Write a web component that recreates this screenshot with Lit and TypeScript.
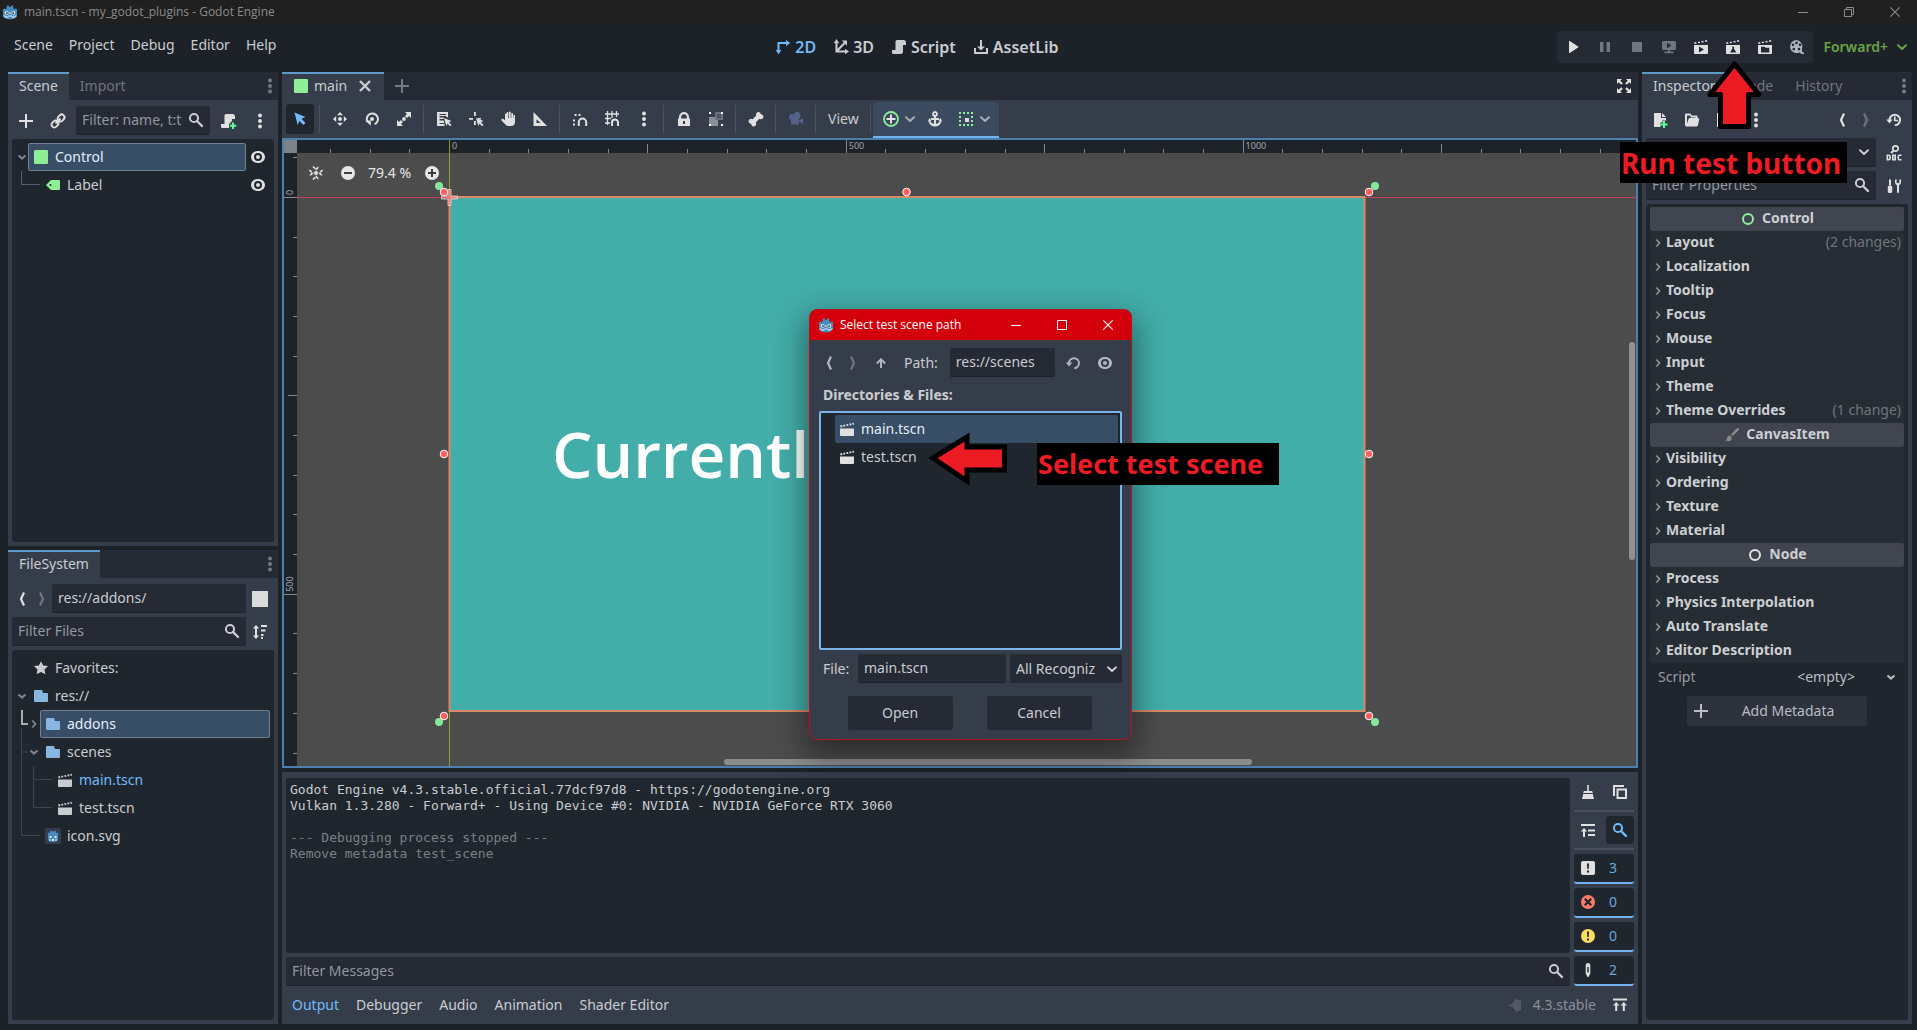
import { LitElement, html, svg, css, nothing } from "lit";
import { customElement } from "lit/decorators.js";
import { classMap } from "lit/directives/class-map.js";

/* 16 x 16 glyphs, painted with currentColor unless a node colour is part of the icon */
const ICONS: Record<string, unknown> = {
  godot: svg`<path fill="#478cbf" d="M1 8 .8 5.6 2.6 4.400 3.700 5 4.900 4.300 4.600 2 6.600 1.200 7.300 2.900h1.400L9.400 1.200l2 .8-.3 2.300 1.200.7 1.100-.6 1.800 1.200L15 8v3.500c0 2.300-3 3.800-7 3.800s-7-1.500-7-3.800z"/><circle cx="4.600" cy="8.800" r="1.900" fill="#e4eef6"/><circle cx="11.400" cy="8.800" r="1.900" fill="#e4eef6"/><circle cx="4.900" cy="8.900" r="1" fill="#3a4450"/><circle cx="11.100" cy="8.900" r="1" fill="#3a4450"/><path d="M8 8v2.200M1.500 12h2v1.200h2.400V12h4.200v1.200h2.400V12h2" fill="none" stroke="#e4eef6" stroke-width=".9"/>`,
  plus: svg`<path d="M7 1v6H1v2h6v6h2V9h6V7H9V1z"/>`,
  link: svg`<g transform="rotate(-45 8 8)" fill="none" stroke="currentColor" stroke-width="1.900"><rect x="0" y="5.200" width="7.400" height="5.600" rx="2.800"/><rect x="8.600" y="5.200" width="7.400" height="5.600" rx="2.800"/><path d="M4.500 8h7"/></g>`,
  search: svg`<circle cx="6" cy="6" r="4.100" fill="none" stroke="currentColor" stroke-width="2"/><path d="m9 9 5 5" stroke="currentColor" stroke-width="2.400" stroke-linecap="round"/>`,
  script: svg`<path d="M6 1a1.500 1.500 0 0 0-1.500 1.500V11H1v2.500A1.500 1.500 0 0 0 2.500 15H9.500a2.500 2.500 0 0 0 2.500-2.500V6h3V3.500A2.500 2.500 0 0 0 12.500 1z"/>`,
  scriptNew: svg`<path d="M6 1a1.500 1.500 0 0 0-1.500 1.500V11H1v2.500A1.500 1.500 0 0 0 2.500 15H9v-4.500h1.500V8.500H12V6h3V3.500A2.500 2.500 0 0 0 12.500 1z"/><path fill="#5fff97" d="M12 9.500v2.200H9.800v2H12V16h2v-2.300h2.200v-2H14V9.500z"/>`,
  dots: svg`<circle cx="8" cy="2.400" r="2"/><circle cx="8" cy="8" r="2"/><circle cx="8" cy="13.600" r="2"/>`,
  eye: svg`<path fill-rule="evenodd" d="M8 2c-4 0-7 2.600-7 6s3 6 7 6 7-2.600 7-6-3-6-7-6m0 2a4 4 0 1 1 0 8 4 4 0 0 1 0-8m0 2a2 2 0 1 0 0 4 2 2 0 0 0 0-4"/>`,
  control: svg`<rect x="1" y="1" width="14" height="14" rx="1.200" fill="#8eef97"/>`,
  label: svg`<path fill="#8eef97" fill-rule="evenodd" d="M6 3 1 8l5 5h8a1 1 0 0 0 1-1V4a1 1 0 0 0-1-1zM5.500 7a1 1 0 1 1 0 2 1 1 0 0 1 0-2"/>`,
  down: svg`<path d="m4.500 6.500 3.500 3 3.500-3" fill="none" stroke="currentColor" stroke-width="2.200"/>`,
  downWide: svg`<path d="m4 6.300 4 3.700 4-3.700" fill="none" stroke="currentColor" stroke-width="2" stroke-linecap="round" stroke-linejoin="round"/>`,
  right: svg`<path d="m6.300 4.500 3.200 3.500-3.200 3.500" fill="none" stroke="currentColor" stroke-width="1.800"/>`,
  back: svg`<path d="M10 1.500 7 8l3 6.500" fill="none" stroke="currentColor" stroke-width="2.200"/>`,
  forward: svg`<path d="m6 1.500 3 6.500-3 6.500" fill="none" stroke="currentColor" stroke-width="2.200"/>`,
  up: svg`<path d="M8 13V5M3.800 8.500 8 4.300l4.200 4.200" fill="none" stroke="currentColor" stroke-width="2"/>`,
  reload: svg`<path d="M4 8a5 5 0 1 1 5.300 5.200" fill="none" stroke="currentColor" stroke-width="2"/><path d="M.8 7.500h6.600L4 11.500z"/>`,
  square: svg`<path d="M0 0h16v16H0z" fill="#d9dcda"/>`,
  sort: svg`<path d="M4 1 .8 4.500H3v7H.8L4 15l3.200-3.500H5v-7h2.200zM9 1h6v2H9zM9 5.500h4.500v2H9zM9 10h2.500v2H9zM9 13h2v2H9z"/>`,
  star: svg`<path d="m8 1.200 2.100 4.300 4.900.6-3.500 3.300.9 4.800L8 11.900l-4.400 2.300.9-4.800L1 6.100l4.900-.6z"/>`,
  folder: svg`<path fill="#87b6e0" d="M2 2a1 1 0 0 0-1 1v10a1 1 0 0 0 1 1h12a1 1 0 0 0 1-1V6a1 1 0 0 0-1-1h-3.500a1 1 0 0 1-1-1V3a1 1 0 0 0-1-1z"/>`,
  clap: svg`<path d="M1 7.500h14V14a1 1 0 0 1-1 1H2a1 1 0 0 1-1-1zM1 4.500l1.800-.4.700 1.900-1.700.4zM4 3.900l1.800-.4.700 1.800-1.800.4zM7.100 3.300l1.700-.4.800 1.800-1.800.3zM10.100 2.700l1.800-.4.700 1.800-1.700.3zM13.100 2l1.500-.3.500 1.900-1.300.3z"/>`,
  gdicon: svg`<rect width="16" height="16" rx="2" fill="#363d52"/><path fill="#478cbf" d="M3 7 2.500 5.500 4 4.500l1 .5.500-2 1.500-.3.500 1h1l.5-1 1.500.3.500 2 1-.5 1.500 1L13 7v4.500c0 1.700-2.200 2.500-5 2.500s-5-.8-5-2.500z"/><path d="M4.500 8h2v2h-2zM9.500 8h2v2h-2zM4 11.500h2v1H4zM7 11h2v2H7zM10 11.500h2v1h-2z" fill="#dfeaf4"/>`,
  close: svg`<path d="m3 3 10 10M13 3 3 13" stroke="currentColor" stroke-width="2.400"/>`,
  select: svg`<path d="M2.500 1.500 13.500 6l-4 1.800 4 4.200-2 2-4.200-4-1.600 4z"/>`,
  move: svg`<circle cx="8" cy="8" r="2"/><path d="M8 1 5 4.200h6zM8 15l3-3.200H5zM1 8l3.200 3V5zM15 8l-3.200-3v6z"/>`,
  rotate: svg`<path d="M3.600 11a5.600 5.600 0 1 1 7 2.200" fill="none" stroke="currentColor" stroke-width="2"/><circle cx="8" cy="8" r="2"/><path d="M1.300 9.500h5.500v5.300z"/>`,
  scale: svg`<circle cx="8" cy="8" r="1.900"/><path d="M9 1h6v6l-2-2-2 2-2-2 2-2zM7 15H1V9l2 2 2-2 2 2-2 2z"/>`,
  listSel: svg`<path fill-rule="evenodd" d="M1 1h11v5.500l-2-.8V5H3.500v1.500H8L7.200 8H3.500v1.500h4L8.500 12H3.500v1h5v2H1z M3.500 3H10v1H3.500z"/><path d="m8 7 7.500 3-2.600 1.200 2.600 2.700-1.300 1.300-2.700-2.600L10.300 15z"/>`,
  pivot: svg`<path d="M6 1h1.800v4H6zM1 7h4v1.800H1zM10 7h3v1.500h-3zM6 10h1.800v4H6z"/><path d="m8 7 7.500 3-2.600 1.200 2.600 2.700-1.300 1.300-2.700-2.600L10.300 15z"/>`,
  pan: svg`<path d="M6.500 1.800a.9.900 0 0 1 1.800 0V7h.6V1.500a.9.900 0 0 1 1.800 0V7h.6V2.600a.9.900 0 0 1 1.700 0V7h.4V4.600a.8.800 0 0 1 1.600 0V11c0 2.500-1.500 4-4 4H8.500c-1.500 0-2.500-.6-3.300-1.800L1.500 9.500c-.8-1 .6-2.300 1.800-1.500L5 9.300V3a.8.800 0 0 1 1.500 0z"/>`,
  ruler: svg`<path fill-rule="evenodd" d="M1.500 1v14h13.500zM4.500 8.200 8.500 12h-4z"/>`,
  snap: svg`<path d="M2.500 3h2v2h-2zM6.500 3h2v2h-2zM1 8.500h2v2H1zM1 12.500h2v2H1z"/><path d="M6.800 15v-3.800a3.700 3.700 0 0 1 7.400 0V15" fill="none" stroke="currentColor" stroke-width="2"/>`,
  grid: svg`<path d="M3.500 0v14M8 0v7M12.500 0v6M1 3h14M1 7.500h6M1 12h5" fill="none" stroke="currentColor" stroke-width="1.300"/><path d="M8 15v-3.500a3 3 0 0 1 6 0V15" fill="none" stroke="currentColor" stroke-width="2"/>`,
  lock: svg`<path fill-rule="evenodd" d="M8 1a5 5 0 0 0-5 5v1.500H2V15h12V7.500h-1V6a5 5 0 0 0-5-5m0 2.200A2.800 2.800 0 0 1 10.800 6v1.500H5.200V6A2.800 2.800 0 0 1 8 3.200M7 10h2v3H7z"/>`,
  group: svg`<path d="M1 6h6v3h3v6H1z" fill="#8a9099"/><path d="M7 1h8v8h-5V9H7z" fill="#6b717c"/><path d="M9 3h4v4H9z" fill="#4f5561"/><path d="M1 1h2v2H1zM13 1h2v2h-2zM1 13h2v2H1zM13 13h2v2h-2z" fill="#fff"/>`,
  bone: svg`<path d="M10.500 1a2.500 2.500 0 0 0-2.200 3.600L4.600 8.300A2.500 2.500 0 1 0 3.200 12.800a2.500 2.500 0 1 0 4.500-1.400l3.700-3.700a2.500 2.500 0 1 0 1.400-4.500A2.500 2.500 0 0 0 10.500 1"/>`,
  camera: svg`<circle cx="9" cy="4.500" r="3.500"/><circle cx="4" cy="6" r="3"/><rect x="3" y="6" width="8" height="7.500" rx="1"/><path d="m11 9.500 4-2.500v6l-4-2.500z"/>`,
  origin: svg`<circle cx="8" cy="8" r="7" fill="none" stroke="#8eef97" stroke-width="1.800"/><path d="M7 3.500h2V7h3.500v2H9v3.500H7V9H3.500V7H7z"/>`,
  anchor: svg`<path fill-rule="evenodd" d="M8 0a3 3 0 0 0-1 5.800V7H4v2h3v3.800C5 12.500 3.800 11.500 3.300 10l1.200-.4L2.300 7 1 10.500l.6-.1C2.400 13.500 5 15.500 8 15.500s5.600-2 6.400-5.100l.6.100L13.700 7l-2.200 2.600 1.200.4c-.5 1.500-1.700 2.500-3.700 2.800V9h3V7H9V5.800A3 3 0 0 0 8 0m0 2a1 1 0 1 1 0 2 1 1 0 0 1 0-2"/>`,
  container: svg`<path d="M2 2h12v12H2z" fill="none" stroke="#8eef97" stroke-width="2" stroke-dasharray="2 2" stroke-dashoffset="1"/><path d="M7 7h4v4H7z" fill="#e6d5e6"/>`,
  center: svg`<rect x="6.300" y="6.300" width="3.400" height="3.400"/><path d="m5 1.500 3 3 3-3M5 14.500l3-3 3 3M1.500 5l3 3-3 3M14.500 5l-3 3 3 3" fill="none" stroke="currentColor" stroke-width="1.700" stroke-dasharray="3.200 1"/>`,
  zoomOut: svg`<circle cx="8" cy="8" r="7"/><path d="M4 7h8v2H4z" fill="#3c3c3c"/>`,
  zoomIn: svg`<circle cx="8" cy="8" r="7"/><path d="M4 7h3V4h2v3h3v2H9v3H7V9H4z" fill="#3c3c3c"/>`,
  expand: svg`<path d="M1 1h5L4.300 2.700 6.800 5.200 5.200 6.800 2.700 4.300 1 6zM15 1v5l-1.700-1.700-2.500 2.500-1.600-1.600 2.500-2.500L10 1zM1 15v-5l1.700 1.700 2.500-2.500 1.600 1.600-2.500 2.500L6 15zM15 15h-5l1.700-1.700-2.500-2.500 1.600-1.600 2.500 2.500L15 10z"/>`,
  ws2d: svg`<path d="M3.500 13V4h9" fill="none" stroke="currentColor" stroke-width="2"/><path d="m11 1 4.300 3L11 7zM.7 11h5.600l-2.800 4.300z"/>`,
  ws3d: svg`<path d="M3.500 3v9.500H13M3.500 12.500 11.500 4" fill="none" stroke="currentColor" stroke-width="2"/><path d="M.8 4.200 3.500 0l2.700 4.200zM12 9.800l4 2.700-4 2.700zM8.800 1.500H14v5.200z"/>`,
  asset: svg`<path d="M7 1h2v6.500h3L8 11.500 4 7.500h3zM1 9h2v4h10V9h2v6H1z"/>`,
  play: svg`<path d="M4 2.500v11a.5.500 0 0 0 .8.400l8.300-5.400a.6.600 0 0 0 0-1L4.800 2.100a.5.500 0 0 0-.8.400"/>`,
  pause: svg`<path d="M3 3h3.500v10H3zM9.500 3H13v10H9.500z"/>`,
  stop: svg`<path d="M3 3h10v10H3z"/>`,
  remote: svg`<path fill-rule="evenodd" d="M2.500 2h11A1.500 1.500 0 0 1 15 3.500v6a1.500 1.500 0 0 1-1.500 1.500H9v1.500h3.500v1.800h-9v-1.800H7V11H2.500A1.500 1.500 0 0 1 1 9.500v-6A1.500 1.500 0 0 1 2.500 2M6 3.700v5.600l4.500-2.800z"/>`,
  clapPlay: svg`<path fill-rule="evenodd" d="M1 6h14v8a1 1 0 0 1-1 1H2a1 1 0 0 1-1-1zM6 7.500v6l5-3zM1 3.600 3 3l.6 1.500-2 .5zM4.600 2.900l2-.5.6 1.400-2 .5zM8.200 2.200l2-.5.6 1.500-2 .4zM11.800 1.500l2-.5.600 1.500-2 .4z"/>`,
  clapTest: svg`<path fill-rule="evenodd" d="M1 6h14v8a1 1 0 0 1-1 1H2a1 1 0 0 1-1-1zM7.300 7.500v2.300L5 13.500h6.400L9 9.800V7.500zM1 3.600 3 3l.6 1.500-2 .5zM4.600 2.900l2-.5.6 1.400-2 .5zM8.200 2.200l2-.5.600 1.500-2 .4zM11.800 1.500l2-.5.600 1.500-2 .4z"/>`,
  clapFolder: svg`<path fill-rule="evenodd" d="M1 6h14v8a1 1 0 0 1-1 1H2a1 1 0 0 1-1-1zM4 7.800v5.700h8.300V8.800H8.500l-.8-1zM1 3.600 3 3l.6 1.500-2 .5zM4.600 2.900l2-.5.6 1.400-2 .5zM8.200 2.200l2-.5.6 1.500-2 .4zM11.800 1.500l2-.5.6 1.500-2 .4z"/>`,
  movie: svg`<path fill-rule="evenodd" d="M7.500 1a6.500 6.500 0 1 0 3.200 12.200c.6 1.200 1.800 2 4.300 2v-1.700c-1.300 0-2-.6-2-1.500V9.500A6.500 6.500 0 0 0 7.500 1m0 1.600a1.300 1.300 0 1 1 0 2.700 1.300 1.300 0 0 1 0-2.700M4 4.500a1.300 1.300 0 1 1 0 2.700 1.300 1.300 0 0 1 0-2.700m7 0a1.300 1.300 0 1 1 0 2.700 1.300 1.300 0 0 1 0-2.700M4.800 8.700a1.300 1.300 0 1 1 0 2.700 1.300 1.300 0 0 1 0-2.700m5.200 0a1.300 1.300 0 1 1 0 2.700 1.300 1.300 0 0 1 0-2.700"/>`,
  newFile: svg`<path d="M2 1v14h6.500v-4.500h2V8.500H14V6H9V1zM10 1v4h4z"/><path fill="#5fff97" d="M11 9v2.500H8.500v2H11V16h2v-2.500h2.500v-2H13V9z"/>`,
  open: svg`<path fill-rule="evenodd" d="M2 1.500a1 1 0 0 0-1 1V13l.8 1.500h10.700a1.500 1.500 0 0 0 1.400-1L15.300 7 14 6h-.5V4.500a1 1 0 0 0-1-1H7.500l-1-2zM3 3.500h3l1 2h4.500V6H5L3 11.500z"/>`,
  save: svg`<path fill-rule="evenodd" d="M1 1v14h14V4l-3-3zm2 1h8v4H3zM8 8.500a2.500 2.500 0 1 1 0 5 2.500 2.500 0 0 1 0-5"/>`,
  history: svg`<path d="M3.600 8a5.200 5.200 0 1 1 5.200 5.200" fill="none" stroke="currentColor" stroke-width="2"/><path d="M.3 7.500h6.400L3.500 11.500z"/><path d="M8.800 4.500V8.500H12" fill="none" stroke="currentColor" stroke-width="1.600"/>`,
  doc: svg`<circle cx="9.500" cy="3.500" r="2.700" fill="none" stroke="currentColor" stroke-width="1.700"/><path d="M7.700 5.500 5 8" stroke="currentColor" stroke-width="2"/><path fill="none" stroke="currentColor" stroke-width="1.600" d="M1.300 10.300h1.200q1.700 0 1.700 2.200t-1.700 2.200H1.300zM6.800 10.300h2.400v4.400H6.800zM15.500 10.300h-2.300q-1 0-1 2.200t1 2.200h2.300"/>`,
  tools: svg`<path d="M3 1.500h2v6H3z"/><rect x="1.800" y="7.500" width="4.400" height="7.500" rx="1.600"/><path d="M9 1.500v3.300a3 3 0 0 0 2 2.400V14a1 1 0 0 0 2 0V7.200a3 3 0 0 0 2-2.400V1.500h-1.700V5h-2.600V1.500z"/>`,
  nodeC: svg`<circle cx="8" cy="8" r="5" fill="none" stroke="#8eef97" stroke-width="2"/>`,
  nodeN: svg`<circle cx="8" cy="8" r="5" fill="none" stroke="#e0e0e0" stroke-width="2"/>`,
  brush: svg`<path d="M14.800 1.200c-1-.6-2 0-3.400 1.300L7 7.500 8.700 9l4.700-4.600c1.300-1.400 2-2.300 1.400-3.200M6 8.500c-1.500 0-2.500.8-2.700 2.200-.2 1.300-.8 2-2 2.300 1 1.200 4 1.800 5.500.4 1-1 1-2.200.7-3.400z"/>`,
  broom: svg`<path d="M7.200 1h1.600v6H12l1 2H3l1-2h3.200zM3 10h10v1.500L14 15H2l1-3.500z"/>`,
  copy: svg`<path fill-rule="evenodd" d="M1 1h11v2H3v9H1zM4.500 4.500H15V15H4.500zm2 2V13H13V6.500z"/>`,
  collapse: svg`<path d="M1 2h14v2H1zM8 7.500h7v2H8zM8 12h7v2H8zM3 15V9.500H.8L4 6l3.200 3.500H5V15z"/>`,
  info: svg`<rect x="1" y="1" width="14" height="14" rx="2"/><path d="M7 3.500h2l-.3 5.500H7.300zM7 10.500h2v2H7z" fill="#20262d"/>`,
  error: svg`<circle cx="8" cy="8" r="7" fill="#f87a6c"/><path d="m4.800 4.800 6.400 6.400M11.200 4.800l-6.400 6.400" stroke="#20262d" stroke-width="2.200"/>`,
  warn: svg`<circle cx="8" cy="8" r="7" fill="#ffdd65"/><path d="M7 3.500h2l-.3 5.500H7.300zM7 10.500h2v2H7z" fill="#20262d"/>`,
  pen: svg`<path fill-rule="evenodd" d="M6.500 1.200h3L10.300 3v8.500L8.500 15h-1l-1.800-3.500V3zM7.300 5v5.500h1.400V5z"/>`,
  pin: svg`<path d="M9 2 14 3.500V13L9 15 5.500 10 1 8.500l4.500-2z"/>`,
  toTop: svg`<path d="M1 1.500h14v2H1zM3.200 14V8.500H1L4.200 5l3.200 3.500H5.200V14zM10.800 14V8.500H8.600L11.800 5 15 8.500h-2.200V14z"/>`,
  winMin: svg`<path d="M3 8.500h10" stroke="currentColor" stroke-width="1"/>`,
  winMax: svg`<path d="M3.500 3.500h9v9h-9z" fill="none" stroke="currentColor"/>`,
  winRestore: svg`<path d="M3.500 5.500h7v7h-7zM5.500 5V3.500h7v7H11" fill="none" stroke="currentColor"/>`,
  winClose: svg`<path d="m3.300 3.300 9.400 9.400M12.700 3.300l-9.400 9.400" fill="none" stroke="currentColor" stroke-width="1.100"/>`,
};

const icon = (name: string) =>
  html`<svg class="ic" viewBox="0 0 16 16" width="16" height="16" fill="currentColor" aria-hidden="true">${ICONS[name]}</svg>`;

const tool = (name: string, label: string, extra = "") =>
  html`<button class="tb ${extra}" aria-label=${label} title=${label}>${icon(name)}</button>`;

const sep = html`<span class="sep"></span>`;

/* Canvas geometry: pixels from the inner corner of the viewport frame */
const ORIGIN = { x: 165, y: 57 };
const FRAME = { w: 915, h: 514 };
const STEP = 39.68;

interface Category { icon: string; name: string; rows: [string, string?][] }
const CATEGORIES: Category[] = [
  { icon: "nodeC", name: "Control", rows: [["Layout", "(2 changes)"], ["Localization"], ["Tooltip"], ["Focus"], ["Mouse"], ["Input"], ["Theme"], ["Theme Overrides", "(1 change)"]] },
  { icon: "brush", name: "CanvasItem", rows: [["Visibility"], ["Ordering"], ["Texture"], ["Material"]] },
  { icon: "nodeN", name: "Node", rows: [["Process"], ["Physics Interpolation"], ["Auto Translate"], ["Editor Description"]] },
];

@customElement("app-root")
export class AppRoot extends LitElement {
  static styles = css`
    :host {
      display: flex; flex-direction: column; position: relative; height: 100vh; overflow: hidden;
      background: #1d2229; color: #c9ccd1;
      font: 14px/20px "Noto Sans", "Open Sans", sans-serif;
      --panel: #363d4a; --tabs: #252a34; --well: #20262d; --accent: #70bafa; --line: #4c7fae;
    }
    * { box-sizing: border-box; }
    button, input, select { font: inherit; color: inherit; border: 0; margin: 0; padding: 0; background: none; border-radius: 0; outline: 0; }
    button { cursor: pointer; display: flex; align-items: center; }
    ul { list-style: none; margin: 0; padding: 0; }
    h2, h3 { margin: 0; font: inherit; }
    .ic { display: block; flex: none; overflow: visible; }
    .grow { flex: 1; min-width: 0; }
    .blue { color: var(--accent); }

    .titlebar { display: flex; align-items: center; height: 24px; flex: none; padding: 0 14px 0 2px; gap: 6px; background: #202020; color: #8b8b8b; font: 12px/16px "Open Sans", "Noto Sans", sans-serif; }
    .winbtns { display: flex; gap: 30px; margin-left: auto; }
    .menubar { display: flex; align-items: center; justify-content: space-between; height: 48px; flex: none; padding: 0 7px 2px 14px; }
    .menus { display: flex; gap: 16px; padding-bottom: 4px; }
    .modes { display: flex; gap: 17px; font-size: 16px; font-weight: 600; }
    .modes button { gap: 4px; }
    .run { display: flex; align-items: center; }
    .runbar { display: flex; gap: 4px; padding: 2px; background: var(--tabs); border-radius: 4px; color: #e0e0e0; }
    .renderer { color: #6aa344; font-weight: 600; margin-left: 10px; gap: 6px; }

    .tb { width: 28px; height: 28px; justify-content: center; flex: none; color: #e0e0e0; }
    .tb.narrow { width: 20px; }
    .tb.off { color: #70757e; }
    .tb.on { background: var(--well); border-radius: 3px; color: var(--accent); }
    .tb.soft { color: #b1b6be; }
    .tb.cam { color: #56618a; }
    .sep { width: 4px; height: 28px; flex: none; background: linear-gradient(90deg, transparent 1px, #4a505c 1px, #4a505c 2px, transparent 2px); }

    .work { display: grid; grid-template-columns: 270px minmax(0, 1fr) 270px; gap: 4px; flex: 1; min-height: 0; padding: 0 5px 6px 8px; }
    .col { display: flex; flex-direction: column; gap: 4px; min-height: 0; min-width: 0; }
    .dock { display: flex; flex-direction: column; flex: 1; min-height: 0; background: var(--panel); }
    .tabs { display: flex; align-items: stretch; height: 28px; flex: none; background: var(--tabs); }
    .tab { padding: 0 11px 2px; border-top: 2px solid transparent; color: #6f757f; }
    .tab.active { background: var(--panel); border-top-color: #5f9acb; color: #c9ccd1; }
    .tabs .menu { margin-left: auto; width: 16px; color: #747a83; }
    .body { display: flex; flex-direction: column; gap: 4px; flex: 1; min-height: 0; padding: 6px 4px 4px; }
    .row { display: flex; align-items: center; gap: 4px; flex: none; }
    .row.tight { gap: 0; }

    .field { display: flex; align-items: center; height: 29px; background: var(--tabs); border-bottom: 1px solid #1e232b; border-radius: 2px; padding: 0 6px 1px; min-width: 0; color: #c9ccd1; }
    .field input { flex: 1; width: 0; min-width: 0; height: 100%; }
    .field input::placeholder { color: #9297a0; opacity: 1; }
    .well { flex: 1; min-height: 0; background: var(--well); border-radius: 3px; position: relative; }
    .tree { padding: 4px; }
    .item { display: flex; align-items: center; height: 28px; color: #c9ccd1; }
    .item .arrow { width: 12px; height: 16px; flex: none; display: flex; justify-content: center; color: #7d838c; }
    .item .pick { flex: 1; height: 28px; gap: 6px; padding: 0 4px 1px; border: 1px solid transparent; border-radius: 2px; text-align: left; min-width: 0; }
    .item.sel .pick { background: #384e66; border-color: #6f8193; color: #e2eefa; }
    .item .tb { width: 24px; }
    .in1 { padding-left: 12px; }
    .in2 { padding-left: 24px; }
    .guides { position: absolute; left: 0; top: 0; width: 60px; height: 100%; fill: none; stroke: #3f454f; }

    .scenetab { gap: 5px; padding: 0 11px 2px; }
    .newtab { padding: 0 10px; color: #747a83; }
    .tabs .expand { margin-left: auto; padding: 0 6px; color: #e0e0e0; }
    .editor { display: flex; flex-direction: column; flex: 1; min-height: 0; }
    .ctools { display: flex; align-items: center; height: 38px; flex: none; gap: 4px; padding: 0 4px; background: var(--panel); }
    .ctools .tb.on { height: 30px; }
    .view { padding: 0 6px; }
    .ctx { display: flex; align-items: center; align-self: flex-end; height: 36px; gap: 1px; margin-left: -4px; padding: 0 4px 0 2px; background: #3b4a5e; border-bottom: 2px solid #73b2ec; border-radius: 3px 3px 0 0; }
    .ctx .pair { display: flex; align-items: center; height: 28px; padding: 0 2px 0 8px; gap: 3px; color: #e0e0e0; }
    .ctx .pair .ic + .ic { color: #a3acb9; }
    .canvas { position: relative; flex: 1; min-height: 0; border: 2px solid var(--line); background: #4c4c4c; overflow: hidden; }
    .stage { position: absolute; inset: 0; display: block; width: 100%; height: 100%; }
    .stage text { font-size: 9px; fill: #a2a5a9; }
    .stage .preview { font: 600 64px "Open Sans", sans-serif; fill: #fff; }
    .zoom { position: absolute; left: 18px; top: 19px; display: flex; align-items: center; height: 28px; color: #e6e6e6; }
    .zoom button { height: 28px; padding: 0 6px; }
    .zoom .zo { margin-left: 4px; }
    .zoom .pct { padding: 0 7px 0 6px; }
    .vbar { position: absolute; right: 1px; top: 202px; width: 6px; height: 218px; background: #919191; border-radius: 3px; }
    .hbar { position: absolute; bottom: 1px; left: 440px; width: 528px; height: 6px; background: #8c8c8c; border-radius: 3px; }

    .bottom { display: grid; grid-template-columns: minmax(0, 1fr) 60px; gap: 4px; flex: none; padding: 6px 4px 4px; background: var(--panel); }
    .logs { display: flex; flex-direction: column; gap: 4px; }
    .log { flex: 1; background: var(--well); border-radius: 3px; padding: 4px; font: 13px/16px "DejaVu Sans Mono", monospace; white-space: pre; color: #c9ccd1; }
    .log .old { color: #7a7f87; }
    .side { display: flex; flex-direction: column; gap: 4px; }
    .duo { display: flex; gap: 4px; height: 28px; }
    .hr { height: 2px; background: #4a505c; }
    .count { height: 30px; width: 60px; padding: 0 6px; gap: 13px; background: var(--well); border-bottom: 2px solid #73b2ec; border-radius: 3px; color: #63a6e0; }
    .count .ic { color: #e0e0e0; }
    .btabs { grid-column: 1 / -1; display: flex; align-items: center; height: 30px; gap: 16px; padding: 0 6px; }
    .btabs .names { display: flex; gap: 17px; }
    .btabs .ver { margin-left: auto; display: flex; align-items: center; gap: 10px; color: #8a9099; }
    .btabs .ver .ic { color: #535a66; }
    .btabs .top { color: #e0e0e0; }

    .obj { justify-content: flex-end; padding-right: 4px; color: #c9ccd1; }
    .props { display: flex; flex-direction: column; padding: 3px 4px 4px; }
    .cat { display: flex; align-items: center; justify-content: center; gap: 6px; height: 24px; padding-bottom: 2px; background: #41454f; border-radius: 2px; font-weight: 700; color: #cdcfd3; }
    .cat .ic { color: #8a8a8a; margin-top: 2px; }
    .sect { background: #272d34; }
    .sect button { display: flex; width: 100%; height: 24px; align-items: center; padding: 0 3px 2px 0; font-weight: 700; color: #cdcfd3; }
    .sect button .ic { color: #8a8f97; margin-top: 2px; }
    .sect .note { margin-left: auto; font-weight: 400; color: #6f757f; }
    .prop { display: flex; align-items: center; height: 28px; padding: 0 5px 0 8px; color: #979ca4; }
    .prop label { flex: 1; }
    .prop button { flex: 1; gap: 28px; justify-content: flex-end; color: #b9bdc3; }
    .meta { align-self: center; width: 180px; height: 30px; margin-top: 5px; padding: 0 6px; background: #2d323c; border-radius: 3px; color: #b9bdc3; }
    .meta span { flex: 1; padding-left: 6px; }

    .dialog { position: absolute; left: 809px; top: 309px; width: 323px; display: flex; flex-direction: column; background: var(--panel); border: 1px solid #b3141f; border-radius: 8px; box-shadow: 0 12px 30px 4px rgba(0, 0, 0, .42); overflow: hidden; }
    .dtitle { display: flex; align-items: center; height: 30px; padding: 0 15px 0 8px; gap: 6px; background: #d3000b; color: #fff; font: 12px/16px "Open Sans", "Noto Sans", sans-serif; }
    .dbody { display: flex; flex-direction: column; padding: 8px 9px 9px; }
    .dbody .nav { gap: 4px; }
    .dbody .nav label { padding: 0 8px 0 5px; }
    .dbody .nav .field { width: 105px; }
    .dhead { font-weight: 700; padding: 8px 4px 6px; line-height: 20px; }
    .files { height: 239px; border: 2px solid #7ab4ea; border-radius: 2px; padding: 2px 2px 2px 14px; background: var(--well); }
    .files button { width: 100%; height: 28px; gap: 6px; padding: 0 4px; border-radius: 2px; }
    .files .ic { color: #e0e0e0; }
    .files .sel { background: #384e66; color: #e2eefa; }
    .frow { display: flex; align-items: center; gap: 4px; padding-top: 4px; }
    .frow label { padding: 0 4px; width: 35px; }
    .frow .pickext { position: relative; width: 112px; height: 29px; display: flex; align-items: center; justify-content: flex-end; padding-right: 2px; background: var(--tabs); border-radius: 2px; }
    .pickext select { position: absolute; inset: 0; width: 100%; appearance: none; padding: 0 24px 0 6px; }
    .acts { display: flex; justify-content: center; gap: 34px; padding: 13px 2px 0 0; }
    .acts button { width: 105px; height: 34px; justify-content: center; background: var(--tabs); border-radius: 2px; }

    .note-box { position: absolute; background: #000; color: #ed1c24; font: 700 28px/42px "Noto Sans", "Open Sans", sans-serif; white-space: nowrap; padding-left: 1px; }
    .note-run { right: 70px; top: 142px; width: 227px; height: 41px; }
    .note-pick { left: 1037px; top: 443px; width: 242px; height: 42px; font-size: 27px; }
    .arrow-up { position: absolute; right: 153px; top: 59px; }
    .arrow-left { position: absolute; left: 927px; top: 430px; }
  `;

  private sceneDock() {
    return html`<section class="dock">
      <div class="tabs"><button class="tab active">Scene</button><button class="tab">Import</button><button class="menu" aria-label="Dock options">${icon("dots")}</button></div>
      <div class="body">
        <div class="row">${tool("plus", "Add node")}${tool("link", "Instance scene")}
          <div class="field grow"><input aria-label="Filter nodes" placeholder="Filter: name, t:t" />${icon("search")}</div>
          ${tool("scriptNew", "Attach script")}${tool("dots", "Scene options")}</div>
        <ul class="well tree">
          <svg class="guides"><path stroke="#5a616b" d="M9.500 32v13.500H28"/></svg>
          ${this.item("control", "Control", { sel: true, arrow: "down", eye: true })}
          ${this.item("label", "Label", { indent: 1, eye: true })}
        </ul>
      </div>
    </section>`;
  }

  private item(ic: string, name: string, o: { sel?: boolean; arrow?: string; indent?: number; eye?: boolean; blue?: boolean } = {}) {
    return html`<li class=${classMap({ item: true, sel: !!o.sel, in1: o.indent === 1, in2: o.indent === 2 })}>
      <span class="arrow">${o.arrow ? icon(o.arrow) : nothing}</span>
      <button class="pick">${icon(ic)}<span class=${o.blue ? "blue" : ""}>${name}</span></button>
      ${o.eye ? tool("eye", "Toggle visibility of " + name) : nothing}
    </li>`;
  }

  private fileDock() {
    return html`<section class="dock">
      <div class="tabs"><button class="tab active">FileSystem</button><button class="menu" aria-label="Dock options">${icon("dots")}</button></div>
      <div class="body">
        <div class="row tight">${tool("back", "Back", "narrow")}${tool("forward", "Forward", "narrow off")}
          <div class="field grow"><input aria-label="Current path" .value=${"res://addons/"} /></div>
          ${tool("square", "Split mode")}</div>
        <div class="row tight"><div class="field grow"><input aria-label="Filter files" placeholder="Filter Files" />${icon("search")}</div>${tool("sort", "Sort files")}</div>
        <ul class="well tree">
          <svg class="guides"><path stroke="#a8adb4" stroke-width="2" d="M10 60v14h6"/><path d="M9.500 78v107.500H28M9.500 102H16M21.500 116v41.500H40M21.500 129.500H40"/></svg>
          ${this.item("star", "Favorites:")}
          ${this.item("folder", "res://", { arrow: "down" })}
          ${this.item("folder", "addons", { arrow: "right", indent: 1, sel: true })}
          ${this.item("folder", "scenes", { arrow: "down", indent: 1 })}
          ${this.item("clap", "main.tscn", { indent: 2, blue: true })}
          ${this.item("clap", "test.tscn", { indent: 2 })}
          ${this.item("gdicon", "icon.svg", { indent: 1 })}
        </ul>
      </div>
    </section>`;
  }

  private stage() {
    const hTicks = Array.from({ length: 33 }, (_, i) => i - 3);
    const vTicks = Array.from({ length: 16 }, (_, i) => i - 1);
    const len = (k: number) => (k % 10 === 0 ? 13 : k % 5 === 0 ? 9 : 4);
    const { x, y } = ORIGIN;
    const handles: [number, number][] = [
      [x - 5, y - 5], [x + FRAME.w / 2, y - 5], [x + FRAME.w + 5, y - 5],
      [x - 5, y + FRAME.h / 2], [x + FRAME.w + 5, y + FRAME.h / 2],
      [x - 5, y + FRAME.h + 5], [x + FRAME.w + 5, y + FRAME.h + 5],
    ];
    const anchors: [number, number][] = [[x - 10, y - 11], [x + FRAME.w + 11, y - 11], [x - 10, y + FRAME.h + 11], [x + FRAME.w + 11, y + FRAME.h + 11]];
    return html`<svg class="stage">
      <rect x=${x} y=${y} width=${FRAME.w} height=${FRAME.h} fill="#42ada9"/>
      <path d="M13 57.500H2000" stroke="#c04259" stroke-width="1"/>
      <path d="M165.500 13V2000" stroke="#8d9d38" stroke-width="1"/>
      <rect x=${x + 0.5} y=${y} width=${FRAME.w} height=${FRAME.h} fill="none" stroke="#d98a64" stroke-width="2"/>
      <text class="preview" x="268" y="338">Currently</text>
      ${anchors.map(([a, b]) => svg`<circle cx=${a} cy=${b} r="4" fill="#84e89a"/>`)}
      ${handles.map(([a, b]) => svg`<circle cx=${a} cy=${b} r="3.800" fill="#ff5f5f" stroke="#fff" stroke-width="1"/>`)}
      <path d="M164 49.500h3v6.500h6.500v3H167v6.500h-3V59h-6.500v-3h6.500z" fill="#ff8585" fill-opacity=".6" stroke="#f5d5d0" stroke-opacity=".8"/>
      <rect width="100%" height="13" fill="#1e2229"/><rect width="13" height="100%" fill="#1e2229"/>
      <rect width="13" height="13" fill="#7d8286"/>
      ${hTicks.map((k) => { const p = Math.round(x + k * STEP) + 0.5; return svg`<path d="M${p} 13v${-len(k)}" stroke="#85888d"/>`; })}
      ${vTicks.map((k) => { const p = Math.round(y + k * STEP) + 0.5; return svg`<path d="M13 ${p}h${-len(k)}" stroke="#85888d"/>`; })}
      <path d="M165.500 0v13" stroke="#86953a"/>
      ${[0, 500, 1000].map((v) => svg`<text x=${x + 3 + (v / 50) * STEP} y="9">${v}</text>`)}
      ${[0, 500].map((v) => svg`<text transform="translate(9 ${y - 2 + (v / 50) * STEP}) rotate(-90)">${v}</text>`)}
    </svg>`;
  }

  private editor() {
    return html`<section class="editor">
      <div class="tabs">
        <button class="tab active scenetab">${icon("control")}main<span class="gap"></span>${icon("close")}</button>
        <button class="newtab" aria-label="New scene">${icon("plus")}</button>
        <button class="expand" aria-label="Distraction free mode">${icon("expand")}</button>
      </div>
      <div class="ctools">
        ${tool("select", "Select", "on")}${sep}
        ${tool("move", "Move")}${tool("rotate", "Rotate")}${tool("scale", "Scale")}${sep}
        ${tool("listSel", "List selection")}${tool("pivot", "Pivot")}${tool("pan", "Pan")}${tool("ruler", "Ruler")}${sep}
        ${tool("snap", "Smart snap")}${tool("grid", "Grid snap")}${tool("dots", "Snap options")}${sep}
        ${tool("lock", "Lock")}${tool("group", "Group")}${sep}
        ${tool("bone", "Skeleton")}${sep}
        ${tool("camera", "Camera override", "cam")}${sep}
        <button class="view">View</button>${sep}
        <div class="ctx">
          <button class="pair" aria-label="Anchor preset">${icon("origin")}${icon("downWide")}</button>
          ${tool("anchor", "Anchor mode")}
          <button class="pair" aria-label="Container sizing">${icon("container")}${icon("downWide")}</button>
        </div>
      </div>
      <div class="canvas">
        ${this.stage()}
        <div class="zoom">
          <button aria-label="Center view">${icon("center")}</button><button class="zo" aria-label="Zoom out">${icon("zoomOut")}</button>
          <span class="pct">79.4 %</span><button aria-label="Zoom in">${icon("zoomIn")}</button>
        </div>
        <span class="vbar"></span><span class="hbar"></span>
      </div>
    </section>`;
  }

  private output() {
    const counts: [string, string, string][] = [["info", "3", "Messages"], ["error", "0", "Errors"], ["warn", "0", "Warnings"], ["pen", "2", "Editor messages"]];
    return html`<section class="bottom">
      <div class="logs">
        <div class="log">Godot Engine v4.3.stable.official.77dcf97d8 - https://godotengine.org
Vulkan 1.3.280 - Forward+ - Using Device #0: NVIDIA - NVIDIA GeForce RTX 3060

<span class="old">--- Debugging process stopped ---
Remove metadata test_scene</span></div>
        <div class="field"><input aria-label="Filter messages" placeholder="Filter Messages" />${icon("search")}</div>
      </div>
      <div class="side">
        <div class="duo">${tool("broom", "Clear output")}${tool("copy", "Copy selection")}</div>
        <div class="hr"></div>
        <div class="duo">${tool("collapse", "Collapse duplicates")}${tool("search", "Show search", "on")}</div>
        <div class="hr"></div>
        ${counts.map(([i, n, l]) => html`<button class="count" aria-label=${l + ": " + n}>${icon(i)}<span>${n}</span></button>`)}
      </div>
      <div class="btabs">
        <div class="names"><button class="blue">Output</button><button>Debugger</button><button>Audio</button><button>Animation</button><button>Shader Editor</button></div>
        <span class="ver">${icon("pin")}4.3.stable</span><button class="top" aria-label="Expand bottom panel">${icon("toTop")}</button>
      </div>
    </section>`;
  }

  private inspector() {
    return html`<section class="dock">
      <div class="tabs"><button class="tab active">Inspector</button><button class="tab">Node</button><button class="tab">History</button><button class="menu" aria-label="Dock options">${icon("dots")}</button></div>
      <div class="body">
        <div class="row">${tool("newFile", "New resource")}${tool("open", "Load resource")}${tool("save", "Save resource")}${tool("dots", "Resource options")}
          <span class="grow"></span>${tool("back", "Previous object", "narrow")}${tool("forward", "Next object", "narrow off")}${tool("history", "Object history")}</div>
        <div class="row"><button class="field grow obj" aria-label="Edited object">${icon("downWide")}</button>${tool("doc", "Open documentation")}</div>
        <div class="row"><div class="field grow"><input aria-label="Filter properties" placeholder="Filter Properties" />${icon("search")}</div>${tool("tools", "Property tools")}</div>
        <div class="well props">
          ${CATEGORIES.map((c) => html`<h3 class="cat">${icon(c.icon)}${c.name}</h3>
            <div class="sect">${c.rows.map(([n, note]) => html`<button>${icon("right")}${n}${note ? html`<span class="note">${note}</span>` : nothing}</button>`)}</div>`)}
          <div class="prop"><label for="script">Script</label><button id="script">&lt;empty&gt;${icon("down")}</button></div>
          <button class="meta">${icon("plus")}<span>Add Metadata</span></button>
        </div>
      </div>
    </section>`;
  }

  private dialog() {
    return html`<section class="dialog" role="dialog" aria-label="Select test scene path">
      <div class="dtitle">${icon("godot")}<h2>Select test scene path</h2>
        <div class="winbtns"><button aria-label="Minimize">${icon("winMin")}</button><button aria-label="Maximize">${icon("winMax")}</button><button aria-label="Close">${icon("winClose")}</button></div></div>
      <div class="dbody">
        <div class="row nav">${tool("back", "Back", "narrow soft")}${tool("forward", "Forward", "narrow off")}${tool("up", "Parent folder", "soft")}
          <label for="path">Path:</label><div class="field"><input id="path" .value=${"res://scenes"} /></div>${tool("reload", "Refresh", "soft")}${tool("eye", "Show hidden files", "soft")}</div>
        <div class="dhead">Directories &amp; Files:</div>
        <div class="files"><button class="sel">${icon("clap")}main.tscn</button><button>${icon("clap")}test.tscn</button></div>
        <div class="frow"><label for="file">File:</label><div class="field grow"><input id="file" .value=${"main.tscn"} /></div>
          <div class="pickext"><select aria-label="File type"><option>All Recogniz</option></select>${icon("downWide")}</div></div>
        <div class="acts"><button>Open</button><button>Cancel</button></div>
      </div>
    </section>`;
  }

  render() {
    return html`
      <header class="titlebar">${icon("godot")}<span>main.tscn - my_godot_plugins - Godot Engine</span>
        <div class="winbtns"><button aria-label="Minimize">${icon("winMin")}</button><button aria-label="Restore">${icon("winRestore")}</button><button aria-label="Close">${icon("winClose")}</button></div>
      </header>
      <nav class="menubar">
        <div class="menus">${["Scene", "Project", "Debug", "Editor", "Help"].map((m) => html`<button>${m}</button>`)}</div>
        <div class="modes"><button class="blue">${icon("ws2d")}2D</button><button>${icon("ws3d")}3D</button><button>${icon("script")}Script</button><button>${icon("asset")}AssetLib</button></div>
        <div class="run">
          <div class="runbar">${tool("play", "Run project")}${tool("pause", "Pause", "off")}${tool("stop", "Stop", "off")}${tool("remote", "Remote debug", "off")}${tool("clapPlay", "Run current scene")}${tool("clapTest", "Run test scene")}${tool("clapFolder", "Run specific scene")}${tool("movie", "Movie maker", "soft")}</div>
          <button class="renderer">Forward+${icon("downWide")}</button>
        </div>
      </nav>
      <main class="work">
        <div class="col">${this.sceneDock()}${this.fileDock()}</div>
        <div class="col">${this.editor()}${this.output()}</div>
        <div class="col">${this.inspector()}</div>
      </main>
      ${this.dialog()}
      <svg class="arrow-up" width="60" height="74" viewBox="0 0 60 74"><path d="M30.500 5 55 35.500H44.500v32h-28v-32H6z" fill="#ed1c24" stroke="#000" stroke-width="5" stroke-linejoin="round"/></svg>
      <div class="note-box note-run">Run test button</div>
      <svg class="arrow-left" width="84" height="58" viewBox="0 0 84 58"><path d="M6 28 40 7v10h37.500v23H40v11z" fill="#ed1c24" stroke="#000" stroke-width="5"/></svg>
      <div class="note-box note-pick">Select test scene</div>
    `;
  }
}
